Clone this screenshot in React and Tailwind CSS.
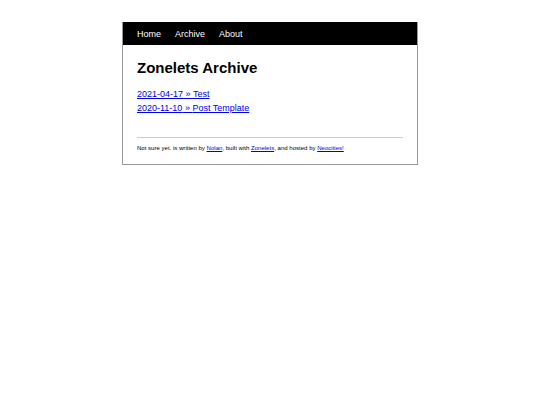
export default function App() {
  const posts = [
    { date: '2021-04-17', title: 'Test' },
    { date: '2020-11-10', title: 'Post Template' },
  ];

  return (
    <div className="min-h-[405px] bg-white pt-[22px] flex justify-center font-['Liberation_Sans',Arial,sans-serif] text-black">
      <div className="w-[296px] h-fit border border-[#999] border-t-0">
        {/* Nav */}
        <nav className="bg-black h-[23px] px-[14px] pt-[2px] flex items-center gap-[14px] text-white text-[9px] leading-none">
          <a href="#">Home</a>
          <a href="#">Archive</a>
          <a href="#">About</a>
        </nav>

        <div className="px-[14px] pb-[12px]">
          <h1 className="mt-[14px] text-[15px] leading-[17px] font-bold">Zonelets Archive</h1>

          <ul className="mt-[11px] text-[9px] leading-[14px]">
            {posts.map((p) => (
              <li key={p.date}>
                <a href="#" className="text-[#0000ee] underline">
                  {p.date} » {p.title}
                </a>
              </li>
            ))}
          </ul>

          <hr className="mt-[22px] border-0 border-t border-[#ccc]" />

          <footer className="mt-[6px] text-[6.05px] leading-[8px]">
            Not sure yet. is written by <a href="#" className="text-[#0000ee] underline">Nolan</a>, built with{' '}
            <a href="#" className="text-[#0000ee] underline">Zonelets</a>, and hosted by{' '}
            <a href="#" className="text-[#0000ee] underline">Neocities!</a>
          </footer>
        </div>
      </div>
    </div>
  );
}
